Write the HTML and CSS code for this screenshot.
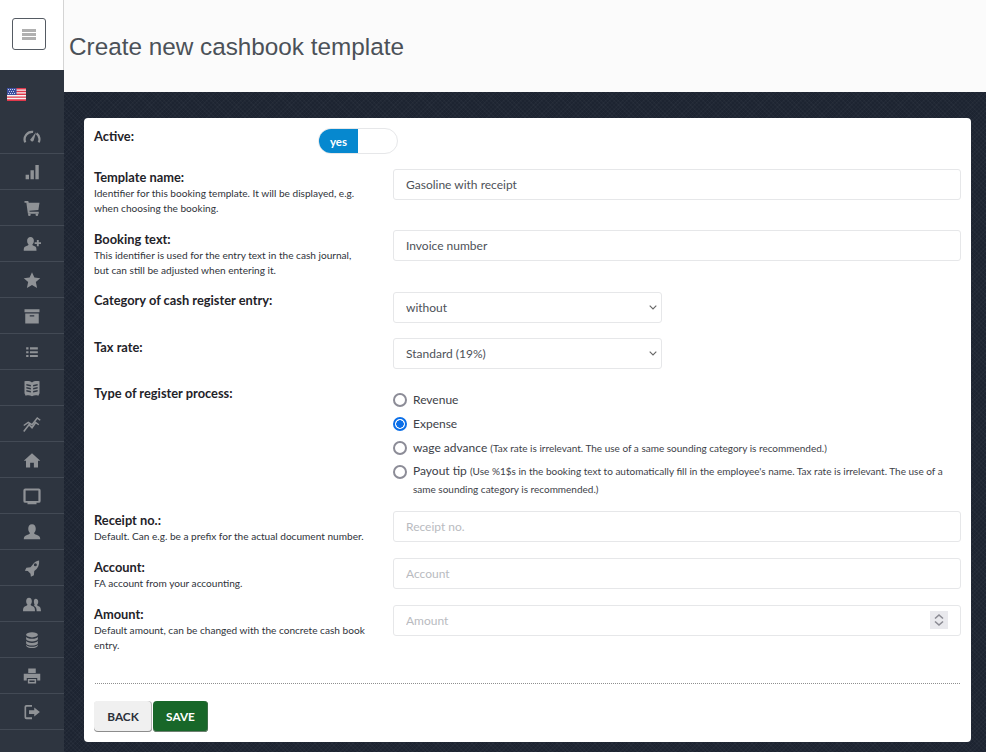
FILE: index.html
```html
<!DOCTYPE html>
<html lang="en">
<head>
<meta charset="utf-8">
<title>Create new cashbook template</title>
<link rel="stylesheet" href="styles.css">
</head>
<body>
<div class="app">
  <aside class="sidebar">
    <div class="brand"><button class="burger" type="button" aria-label="Menu"><span></span><span></span><span></span></button></div>
    <div class="flag-row">
      <svg class="flag" viewBox="0 0 19 13"><rect width="19" height="13" fill="#f5f5f5"/><path fill="#e0374a" d="M0 0h19v1.4H0zM0 2.8h19v1.4H0zM0 5.6h19v1.4H0zM0 8.4h19v1.4H0zM0 11.2h19v1.8H0z"/><rect width="9.5" height="7" fill="#3d4f9e"/><path fill="#c8d0ee" d="M1 1h1v1H1zM3 1h1v1H3zM5 1h1v1H5zM7 1h1v1H7zM2 3h1v1H2zM4 3h1v1H4zM6 3h1v1H6zM1 5h1v1H1zM3 5h1v1H3zM5 5h1v1H5zM7 5h1v1H7z"/></svg>
    </div>
    <nav class="nav">
      <a class="nav-item"><svg class="ic" viewBox="0 0 24 24"><path class="ic-gauge" d="M3 20.500A10 10 0 0 1 13.500 6.600M18 8.500a10 10 0 0 1 3 12"/><path d="M17.500 6.500l-3.300 11.500a2.300 2.300 0 0 1-4.200-1.800z"/></svg></a>
      <a class="nav-item"><svg class="ic" viewBox="0 0 24 24"><path d="M3.500 15.500H8v6H3.500zM10 9.500h4.500v12H10zM16.500 2.500H21v19h-4.500z"/></svg></a>
      <a class="nav-item"><svg class="ic" viewBox="0 0 24 24"><path d="M2 2.500h5l.7 2.500H22l-1.500 9.500-12 1 .3 1.500H21v2.500H6.500L4.500 5H2z"/><circle cx="8.500" cy="21" r="1.800"/><circle cx="18.500" cy="21" r="1.800"/></svg></a>
      <a class="nav-item"><svg class="ic" viewBox="0 0 24 24"><path d="M10 2.500c3 0 4.500 2.300 4.500 5.200 0 2.300-.9 4-2 5 .1 1 .8 1.500 3 2.300 2 .8 2.500 1.600 2.500 6H1c0-4.400.8-5.200 3-6 2-.8 3.300-1.300 3.400-2.300-1.100-1-1.900-2.700-1.900-5C5.500 4.800 7 2.500 10 2.500z"/><path d="M18.500 6.500h2.500v3h3v2.500h-3v3h-2.500v-3h-3V9.500h3z"/></svg></a>
      <a class="nav-item"><svg class="ic" viewBox="0 0 24 24"><path d="M12 1.500l3.200 7.200 7.800.8-5.900 5.200 1.700 7.800L12 18.500l-6.800 4 1.700-7.800L1 9.500l7.800-.8z"/></svg></a>
      <a class="nav-item"><svg class="ic" viewBox="0 0 24 24"><path fill-rule="evenodd" d="M2 3h20v4H2zM3 8.500h18V22H3zM9 11v1.800h6V11z"/></svg></a>
      <a class="nav-item"><svg class="ic ic-sm" viewBox="0 0 24 24"><path d="M2 4h4v3.500H2zM2 10.500h4V14H2zM2 17h4v3.500H2zM8.500 4H22v3.500H8.500zM8.500 10.500H22V14H8.500zM8.500 17H22v3.500H8.500z"/></svg></a>
      <a class="nav-item"><svg class="ic" viewBox="0 0 24 24"><path fill-rule="evenodd" d="M2 3c3.800-.8 7.500-.5 10 1.500 2.500-2 6.200-2.300 10-1.500v16l-1.500 3.200c-3-.8-5.800-.8-8.500.8-2.700-1.600-5.500-1.600-8.500-.8L2 19zM4.500 6.500v2l6 1.500V8zM4.500 10.500v2l6 1.500v-2zM4.500 14.500v2l6 1.500v-2zM19.500 6.500l-6 1.500v2l6-1.500zM19.500 10.500l-6 1.500v2l6-1.500zM19.500 14.500l-6 1.500v2l6-1.500z"/></svg></a>
      <a class="nav-item"><svg class="ic" viewBox="0 0 24 24"><path class="ic-line" d="M1 22l7-9 4 4 5-7 4 3M1 14l6-4 5 3 7-9 4 3"/></svg></a>
      <a class="nav-item"><svg class="ic" viewBox="0 0 24 24"><path d="M12 3l11 10h-3v9h-5.500v-6.500h-5V22H4v-9H1z"/></svg></a>
      <a class="nav-item"><svg class="ic" viewBox="0 0 24 24"><path fill-rule="evenodd" d="M3 2h18a2.500 2.500 0 0 1 2.500 2.500v14A2.500 2.500 0 0 1 21 21h-3v2H6v-2H3a2.500 2.500 0 0 1-2.500-2.500v-14A2.500 2.500 0 0 1 3 2zM3.500 4.500V18.500h17V4.500z"/></svg></a>
      <a class="nav-item"><svg class="ic" viewBox="0 0 24 24"><path d="M12 1.500c3.400 0 5 2.700 5 6 0 2.600-1 4.700-2.300 5.700.1 1.200 1 1.800 4 2.800 3.200 1.100 4 2.100 4.300 5.500H1c.3-3.400 1.100-4.400 4.300-5.500 3-1 3.900-1.600 4-2.800C8 12.200 7 10.100 7 7.500c0-3.300 1.600-6 5-6z"/></svg></a>
      <a class="nav-item"><svg class="ic" viewBox="0 0 24 24"><path fill-rule="evenodd" d="M21.500 2c.5 6-1.500 10.500-6.500 14l-.5 5.500-4 2-.5-4-3.500-3.500-4-.5 2-4 5.500-.5C14 6 16.500 2.500 21.500 2zM16.500 5.500a2 2 0 1 0 0 4 2 2 0 0 0 0-4z"/></svg></a>
      <a class="nav-item"><svg class="ic" viewBox="0 0 24 24"><path d="M8 3.500c2.600 0 3.800 2.200 3.800 4.700 0 2-.8 3.800-1.700 4.600.1 1.100.8 1.600 2.800 2.300 2.200.8 3.100 2 3.100 6.400H0c0-4.400.9-5.600 3.100-6.400 2-.7 2.700-1.200 2.800-2.300-.9-.8-1.700-2.600-1.700-4.600C4.200 5.700 5.400 3.500 8 3.500z"/><path d="M17 5c2.200 0 3.300 1.900 3.300 4 0 1.700-.6 3.200-1.500 4 .1 1 .6 1.400 2.200 2 1.800.8 2.700 1.800 3 6.500h-5.800c0-3.600-.9-6-3.400-7.300 0-.4.300-.8.700-1.200-.6-.9-1-2.500-1-4.200C14.500 6.600 15.200 5 17 5z"/></svg></a>
      <a class="nav-item"><svg class="ic" viewBox="0 0 24 24"><ellipse cx="12" cy="5" rx="7.800" ry="3.500"/><path d="M4.200 7.500c1 1.800 3.800 2.900 7.800 2.900s6.800-1.100 7.800-2.900V11c-1 1.800-3.800 2.900-7.800 2.900S5.200 12.800 4.200 11zM4.200 13c1 1.800 3.800 2.900 7.800 2.900s6.800-1.100 7.800-2.900v3.500c-1 1.800-3.800 2.900-7.800 2.900s-6.800-1.100-7.800-2.900zM4.200 18.300c1.300 1.800 4 2.800 7.800 2.800s6.500-1 7.800-2.800v1.400c-.8 1.900-3.800 3.100-7.800 3.100s-7-1.200-7.800-3.100z"/></svg></a>
      <a class="nav-item"><svg class="ic" viewBox="0 0 24 24"><path fill-rule="evenodd" d="M7 2h10v6H7zM1 9h22v9h-4v-3.500H5V18H1zM6.500 16h11v6h-11zM8.500 18v2h7v-2z"/></svg></a>
      <a class="nav-item"><svg class="ic" viewBox="0 0 24 24"><path fill-rule="evenodd" d="M4.500 2.500H12V5H5a.8.8 0 0 0-.8.800v12.400c0 .4.400.8.800.8h7v2.500H4.500A2.500 2.500 0 0 1 2 19V5a2.500 2.500 0 0 1 2.500-2.500z"/><path d="M15 6l7.500 6-7.500 6v-3.500H8v-5h7z"/></svg></a>
      <a class="nav-item"></a>
    </nav>
  </aside>

  <div class="main">
    <header class="page-head"><h1 class="page-title">Create new cashbook template</h1></header>
    <div class="content">
      <form class="card">
        <div class="row row-active">
          <div class="label-col"><div class="label">Active:</div></div>
          <div class="field-col"><div class="toggle"><span class="toggle-on">yes</span></div></div>
        </div>
        <div class="row row-template">
          <div class="label-col"><div class="label">Template name:</div><div class="hint">Identifier for this booking template. It will be displayed, e.g. when choosing the booking.</div></div>
          <div class="field-col"><input class="control" type="text" value="Gasoline with receipt"></div>
        </div>
        <div class="row row-booking">
          <div class="label-col"><div class="label">Booking text:</div><div class="hint">This identifier is used for the entry text in the cash journal, but can still be adjusted when entering it.</div></div>
          <div class="field-col"><input class="control" type="text" value="Invoice number"></div>
        </div>
        <div class="row row-select row-category">
          <div class="label-col"><div class="label">Category of cash register entry:</div></div>
          <div class="field-col"><select class="control select"><option>without</option></select></div>
        </div>
        <div class="row row-select">
          <div class="label-col"><div class="label">Tax rate:</div></div>
          <div class="field-col"><select class="control select"><option>Standard (19%)</option></select></div>
        </div>
        <div class="row row-type">
          <div class="label-col"><div class="label">Type of register process:</div></div>
          <div class="field-col radios">
            <label class="radio"><input type="radio" name="type"><span>Revenue</span></label>
            <label class="radio"><input type="radio" name="type" checked><span>Expense</span></label>
            <label class="radio"><input type="radio" name="type"><span>wage advance <small>(Tax rate is irrelevant. The use of a same sounding category is recommended.)</small></span></label>
            <label class="radio radio-long"><input type="radio" name="type"><span>Payout tip <small>(Use %1$s in the booking text to automatically fill in the employee's name. Tax rate is irrelevant. The use of a same sounding category is recommended.)</small></span></label>
          </div>
        </div>
        <div class="row row-short">
          <div class="label-col"><div class="label">Receipt no.:</div><div class="hint">Default. Can e.g. be a prefix for the actual document number.</div></div>
          <div class="field-col"><input class="control" type="text" placeholder="Receipt no."></div>
        </div>
        <div class="row row-short">
          <div class="label-col"><div class="label">Account:</div><div class="hint">FA account from your accounting.</div></div>
          <div class="field-col"><input class="control" type="text" placeholder="Account"></div>
        </div>
        <div class="row row-amount">
          <div class="label-col"><div class="label">Amount:</div><div class="hint">Default amount, can be changed with the concrete cash book entry.</div></div>
          <div class="field-col"><div class="number-wrap"><input class="control" type="text" placeholder="Amount"><span class="spinner"><svg viewBox="0 0 18 18"><path d="M5 7.500l4-3.500 4 3.500M5 10.500l4 3.500 4-3.500"/></svg></span></div></div>
        </div>
        <hr class="divider">
        <div class="actions">
          <button class="btn btn-back" type="button">BACK</button>
          <button class="btn btn-save" type="button">SAVE</button>
        </div>
      </form>
    </div>
  </div>
</div>
</body>
</html>
```
FILE: styles.css
```css
* { box-sizing: border-box; }
html, body { margin: 0; height: 100%; overflow: hidden; }
body { font-family: Lato, "Liberation Sans", sans-serif; font-size: 13px; color: #4a4f56; }
.app { display: flex; height: 752px; }

.sidebar { width: 64px; flex: none; background: #2e3540; }
.brand { height: 70px; background: #fff; border-right: 1px solid #d4d4d4; padding: 18px 0 0 12px; }
.burger { display: flex; flex-direction: column; justify-content: center; gap: 1px; width: 34px; height: 32px; padding: 0 9px; background: #fff; border: 1px solid #555b63; border-radius: 3px; }
.burger span { display: block; height: 3px; width: 100%; background: #b0b0b0; }
.flag-row { height: 48px; padding: 18px 0 0 7px; }
.flag { display: block; width: 19px; height: 13px; }
.nav { display: flex; flex-direction: column; }
.nav-item { display: flex; align-items: center; justify-content: center; height: 36px; border-bottom: 1px solid #434a55; }
.ic { width: 18px; height: 18px; fill: #8f9296; }
.ic-sm { width: 14px; height: 14px; }
.ic-line { fill: none; stroke: #8f9296; stroke-width: 2; }
.ic-gauge { fill: none; stroke: #8f9296; stroke-width: 3; }

.main { flex: 1; min-width: 0; display: flex; flex-direction: column; }
.page-head { height: 92px; flex: none; background: #fbfbfb; padding: 32px 0 0 5px; }
.page-title { margin: 0; font: 400 24.300px/29px "Liberation Sans", Arial, sans-serif; color: #4b5158; }
.content { flex: 1; padding: 26px 15px 10px 20px; background-color: #1d2431; background-image: repeating-linear-gradient(45deg, rgba(255,255,255,.025) 0 1px, transparent 1px 3px), repeating-linear-gradient(-45deg, rgba(255,255,255,.025) 0 1px, transparent 1px 3px); }

.card { height: 624px; background: #fff; border-radius: 4px; padding: 10px; display: flex; flex-direction: column; }
.row { display: flex; }
.label-col { width: 299px; flex: none; padding-right: 27px; }
.field-col { flex: 1; min-width: 0; }
.label { font-size: 12.850px; line-height: 17px; font-weight: 700; color: #1f2329; }
.hint { font-size: 10.100px; line-height: 15px; color: #2f333a; }

.row-active { height: 41px; }
.row-template { height: 61px; }
.row-booking { height: 62px; }
.row-booking .label { padding-top: 1px; }
.row-select { height: 46px; }
.row-select .label { padding-top: 1px; }
.row-category .label { padding-top: 0; }
.row-type { height: 128px; padding-top: 1px; }
.row-short { height: 47px; }
.row-short .label, .row-amount .label { padding-top: 1px; }
.row-amount { height: 78px; }

.control { display: block; width: 100%; height: 31px; padding: 0 12px; border: 1px solid #e6e7e9; border-radius: 3px; background: #fff; font: 400 12px Lato, "Liberation Sans", sans-serif; color: #4d5158; outline: none; }
.control::placeholder { color: #b9bbbf; opacity: 1; }
.select { width: 269px; appearance: none; background-image: url("data:image/svg+xml,%3Csvg xmlns='http://www.w3.org/2000/svg' width='8' height='5'%3E%3Cpath d='M.7.7L4 4 7.300.7' fill='none' stroke='%23666' stroke-width='1.100'/%3E%3C/svg%3E"); background-repeat: no-repeat; background-position: right 4px center; }

.toggle { width: 80px; height: 26px; margin-left: -75px; border: 1px solid #e6e7e9; border-radius: 13px; overflow: hidden; background: #fff; }
.toggle-on { display: block; width: 39px; height: 24px; background: #0688cf; color: #fff; font-weight: 700; font-size: 11.500px; line-height: 26px; text-align: center; }

.radios { padding-top: 3px; }
.radio { display: flex; align-items: flex-start; height: 24px; font-size: 12px; line-height: 24px; color: #3d4148; }
.radio input { appearance: none; flex: none; width: 14px; height: 14px; margin: 5px 6px 0 0; border: 2px solid #8c8c97; border-radius: 50%; background: #fff; }
.radio input:checked { border-color: #0b6fe8; background: radial-gradient(circle, #0b6fe8 0 3.500px, #fff 4px); }
.radio small { font-size: 10px; line-height: 1; }
.radio-long { height: auto; line-height: 18px; }
.radio-long span { padding-top: 2px; }

.number-wrap { position: relative; }
.spinner { position: absolute; right: 13px; top: 6px; width: 18px; height: 18px; background: #e9e9ed; }
.spinner svg { display: block; width: 18px; height: 18px; fill: none; stroke: #8b8b93; stroke-width: 1.600; }

.divider { margin: 0 1px; border: 0; border-top: 1px dotted #8f8f8f; height: 0; }
.actions { padding-top: 17px; display: flex; gap: 1px; }
.btn { height: 31px; padding: 0; border-radius: 4px; border: 0; font: 700 11.800px Lato, "Liberation Sans", sans-serif; }
.btn-back { width: 58px; background: #f0f0f0; color: #2b303a; box-shadow: inset 0 -1px 0 #8c8c8c, inset -1px 0 0 #b5b5b5; }
.btn-save { width: 55px; background: #186729; color: #fff; box-shadow: inset 0 -1px 0 #6d7f70, inset -1px 0 0 #3d6e47; }
```
